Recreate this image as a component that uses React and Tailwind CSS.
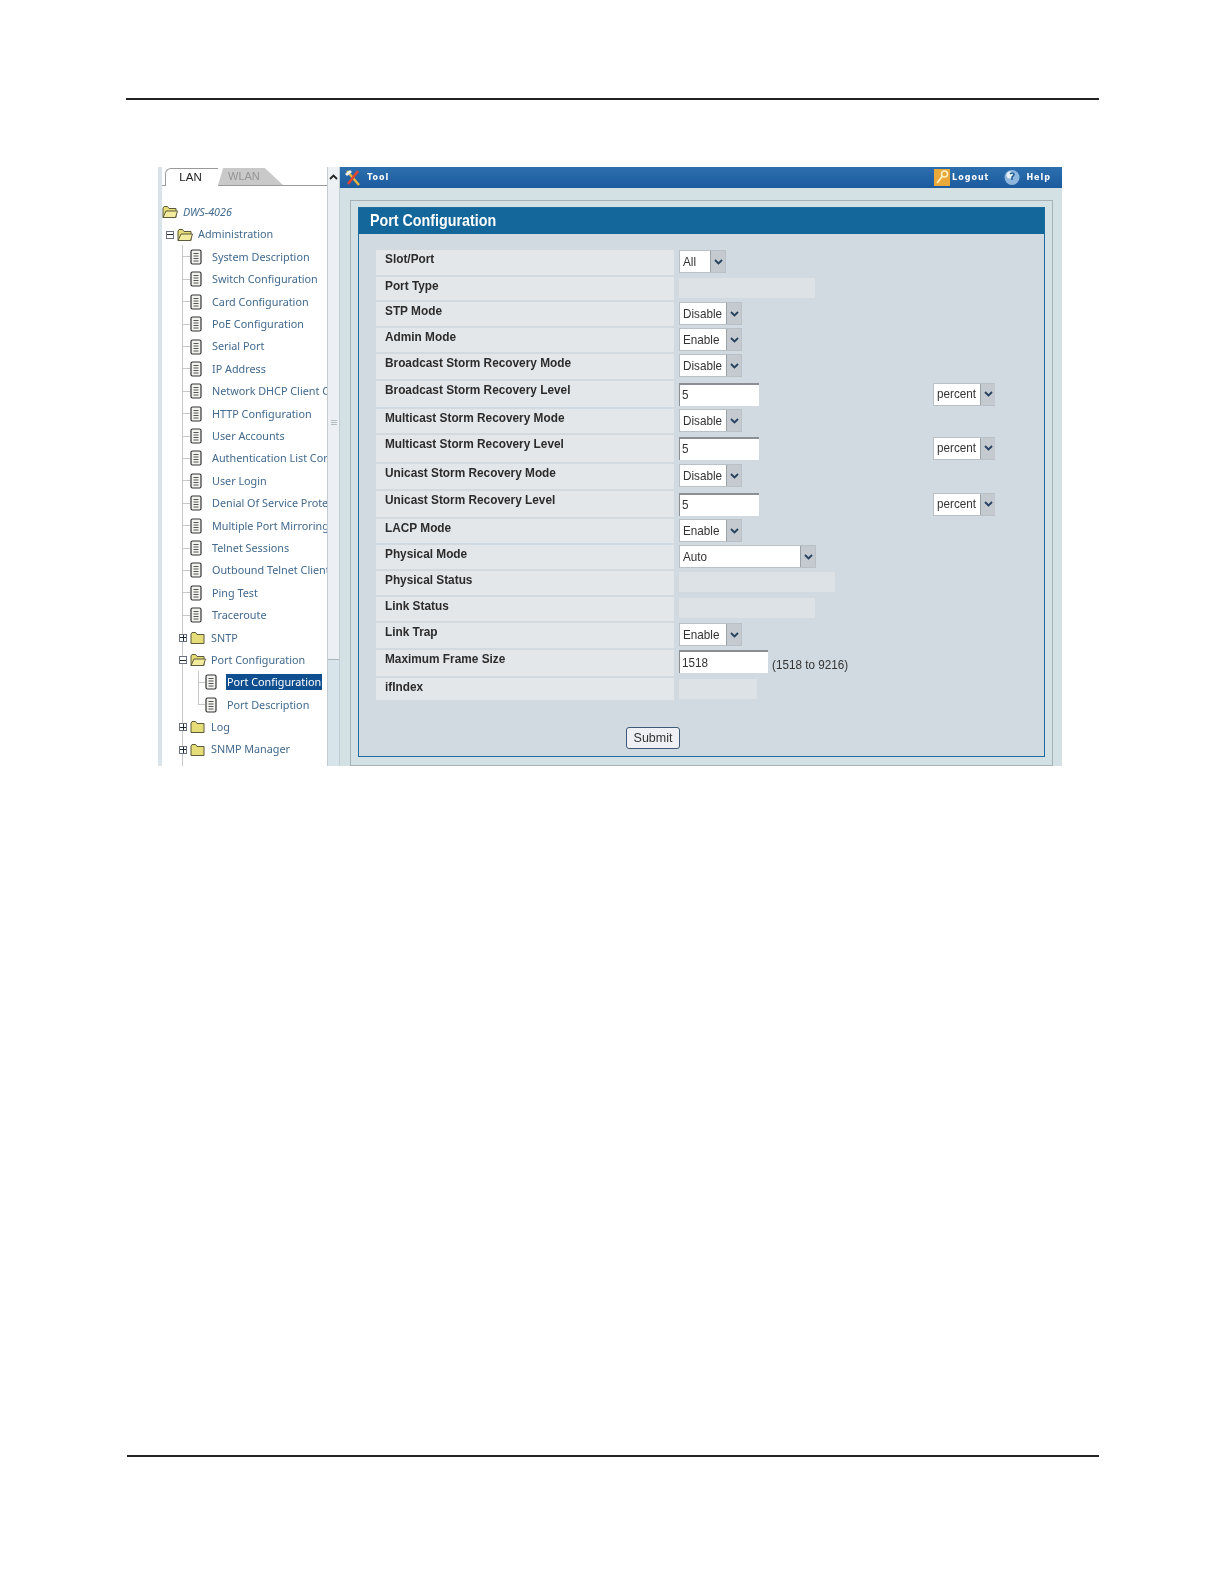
const treeRows = [
  { label: "DWS-4026", indent: 0, icon: "open", italic: true },
  { label: "Administration", indent: 4, icon: "open", box: "minus" },
  { label: "System Description", indent: 28, icon: "doc", stub: true },
  { label: "Switch Configuration", indent: 28, icon: "doc", stub: true },
  { label: "Card Configuration", indent: 28, icon: "doc", stub: true },
  { label: "PoE Configuration", indent: 28, icon: "doc", stub: true },
  { label: "Serial Port", indent: 28, icon: "doc", stub: true },
  { label: "IP Address", indent: 28, icon: "doc", stub: true },
  { label: "Network DHCP Client Configuration", indent: 28, icon: "doc", stub: true },
  { label: "HTTP Configuration", indent: 28, icon: "doc", stub: true },
  { label: "User Accounts", indent: 28, icon: "doc", stub: true },
  { label: "Authentication List Configuration", indent: 28, icon: "doc", stub: true },
  { label: "User Login", indent: 28, icon: "doc", stub: true },
  { label: "Denial Of Service Protection", indent: 28, icon: "doc", stub: true },
  { label: "Multiple Port Mirroring", indent: 28, icon: "doc", stub: true },
  { label: "Telnet Sessions", indent: 28, icon: "doc", stub: true },
  { label: "Outbound Telnet Client", indent: 28, icon: "doc", stub: true },
  { label: "Ping Test", indent: 28, icon: "doc", stub: true },
  { label: "Traceroute", indent: 28, icon: "doc", stub: true },
  { label: "SNTP", indent: 17, icon: "closed", box: "plus" },
  { label: "Port Configuration", indent: 17, icon: "open", box: "minus" },
  { label: "Port Configuration", indent: 43, icon: "doc", stub: true, selected: true },
  { label: "Port Description", indent: 43, icon: "doc", stub: true },
  { label: "Log", indent: 17, icon: "closed", box: "plus" },
  { label: "SNMP Manager", indent: 17, icon: "closed", box: "plus" },
  { label: "", indent: 17, icon: "closed", box: "plus" },
];

const formRows = [
  { label: "Slot/Port", h: "h-[27px]", select: "All", selectW: "w-[47px]" },
  { label: "Port Type", h: "h-[25px]", bar: "w-[136px]" },
  { label: "STP Mode", h: "h-[26px]", select: "Disable" },
  { label: "Admin Mode", h: "h-[26px]", select: "Enable" },
  { label: "Broadcast Storm Recovery Mode", h: "h-[27px]", select: "Disable" },
  { label: "Broadcast Storm Recovery Level", h: "h-[28px]", input: "5", unit: true },
  { label: "Multicast Storm Recovery Mode", h: "h-[26px]", select: "Disable" },
  { label: "Multicast Storm Recovery Level", h: "h-[29px]", input: "5", unit: true },
  { label: "Unicast Storm Recovery Mode", h: "h-[27px]", select: "Disable" },
  { label: "Unicast Storm Recovery Level", h: "h-[28px]", input: "5", unit: true },
  { label: "LACP Mode", h: "h-[26px]", select: "Enable" },
  { label: "Physical Mode", h: "h-[26px]", select: "Auto", selectW: "w-[137px]" },
  { label: "Physical Status", h: "h-[26px]", bar: "w-[156px]" },
  { label: "Link Status", h: "h-[26px]", bar: "w-[136px]" },
  { label: "Link Trap", h: "h-[27px]", select: "Enable" },
  { label: "Maximum Frame Size", h: "h-[28px]", input: "1518", wide: true, hint: "(1518 to 9216)" },
  { label: "ifIndex", h: "h-[24px]", bar: "w-[78px]" },
];

const FolderIcon = ({ open }) => (
  <svg width="16" height="14" viewBox="0 0 16 14" className="shrink-0">
    <path d="M1 3 L1 12.5 L14 12.5 L14 3.5 L7 3.5 L5.5 1.5 L2 1.5 Z" fill="#e6dc78" stroke="#5b5a3a" strokeWidth="1" />
    {open && <path d="M1 12.5 L4 6 L15.5 6 L13.5 12.5 Z" fill="#f3ec9f" stroke="#5b5a3a" strokeWidth="1" />}
  </svg>
);

const DocIcon = () => (
  <svg width="12" height="16" viewBox="0 0 12 16" className="shrink-0">
    <rect x="1" y="1" width="10" height="14" rx="1.5" fill="#f2f2ee" stroke="#333" strokeWidth="1.2" />
    <path d="M3.5 4.5 H8.5 M3.5 7 H8.5 M3.5 9.5 H8.5 M3.5 12 H8.5" stroke="#444" strokeWidth="0.9" />
  </svg>
);

const TreeBox = ({ type }) => (
  <span className="w-[8px] h-[8px] border border-gray-500 bg-white flex items-center justify-center shrink-0 relative">
    <span className="w-[6px] h-px bg-gray-800"></span>
    {type === "plus" && <span className="absolute w-px h-[6px] bg-gray-800"></span>}
  </span>
);

const TreeRow = ({ row }) => (
  <div className="h-[22.4px] flex items-center whitespace-nowrap" style={{ paddingLeft: row.indent }}>
    {row.box && (
      <span className="mr-[3px]">
        <TreeBox type={row.box} />
      </span>
    )}
    {row.stub && <span className="w-[7px] h-px bg-[#c8c8c8] -ml-[7px] shrink-0"></span>}
    {row.icon === "doc" ? <DocIcon /> : <FolderIcon open={row.icon === "open"} />}
    <span
      className={
        "text-[10.8px] " +
        (row.icon === "doc" ? "ml-[9px] px-px " : "ml-[5px] ") +
        (row.italic ? "italic " : "") +
        (row.selected ? "bg-[#0f4f8f] text-white" : "text-[#41698d]")
      }
    >
      {row.label}
    </span>
  </div>
);

const SelectBox = ({ value, width = "w-[63px]" }) => (
  <div className={"h-[23px] bg-white border border-[#b9c0c6] flex items-center justify-between text-[13px] text-[#333] pl-[3px] " + width}>
    <span className="scale-x-[0.9] origin-left">{value}</span>
    <span className="w-[15px] h-full bg-[#c4cad0] border-l border-[#9aa3aa] flex items-center justify-center shrink-0">
      <svg width="9" height="6" viewBox="0 0 9 6">
        <path d="M1 1 L4.5 4.5 L8 1" fill="none" stroke="#27415f" strokeWidth="1.8" />
      </svg>
    </span>
  </div>
);

const TextBox = ({ value, wide }) => (
  <div className={"h-[23px] bg-white border-t-2 border-l border-t-[#8b8f93] border-l-[#8b8f93] flex items-center pl-[2px] text-[13px] text-[#333] " + (wide ? "w-[89px]" : "w-[80px] mt-[1.5px]")}>
    <span className="scale-x-[0.9] origin-left">{value}</span>
  </div>
);

const FormRow = ({ row }) => (
  <div className={"flex " + row.h}>
    <div className="w-[298px] mb-[2px] bg-[#e4e7ea] pl-[9px] text-[13px] leading-[18px] font-bold text-[#2b2b2b] shrink-0">
      <span className="inline-block scale-x-[0.91] origin-left whitespace-nowrap">{row.label}</span>
    </div>
    <div className="ml-[5px] flex items-start flex-1">
      {row.select && <SelectBox value={row.select} width={row.selectW} />}
      {row.bar && <div className={"h-[20px] mt-[1px] bg-[#dde2e6] " + row.bar}></div>}
      {row.input && <TextBox value={row.input} wide={row.wide} />}
      {row.hint && <span className="ml-[4px] mt-[5px] text-[13px] text-[#333] inline-block scale-x-[0.9] origin-left whitespace-nowrap">{row.hint}</span>}
      {row.unit && (
        <div className="ml-auto mr-[49px] mt-[1.5px]">
          <SelectBox value="percent" width="w-[62px]" />
        </div>
      )}
    </div>
  </div>
);

const App = () => {
  return (
    <div className="w-[1224px] h-[1584px] bg-white overflow-hidden flex flex-col font-['Liberation_Sans',Arial,sans-serif]">
      <div className="h-[2px] bg-[#222] mt-[98px] ml-[126px] w-[973px] shrink-0"></div>

      <div className="mt-[67px] ml-[158px] w-[904px] h-[599px] flex overflow-hidden blur-[0.5px] shrink-0">
        {/* tree */}
        <div className="w-[169px] bg-white border-l-[4px] border-l-[#d9e3ea] flex flex-col overflow-hidden font-['Noto_Sans',sans-serif] shrink-0">
          <div className="h-[19px] flex items-end border-b border-[#9a9a9a] shrink-0 font-['Liberation_Sans',sans-serif]">
            <div className="ml-[3px] w-[53px] h-[18px] bg-white border-l border-t border-[#9a9a9a] rounded-tl-md flex items-center justify-center text-[11.5px] text-[#222] -mb-px pr-[3px] relative">
              LAN
            </div>
            <div className="w-[65px] h-[17px] bg-[#c9c9c9] [clip-path:polygon(0_100%,8%_0,72%_0,100%_100%)] flex items-center pl-[10px] text-[11px] text-[#959595]">
              WLAN
            </div>
          </div>
          <div className="pt-[15px] relative flex-1">
            <div className="absolute left-[20px] top-[59px] bottom-0 w-px bg-[#c8c8c8]"></div>
            <div className="absolute left-[36px] top-[485px] h-[34px] w-px bg-[#c8c8c8]"></div>
            {treeRows.map((row, i) => (
              <div key={i} className="relative">
                <TreeRow row={row} />
              </div>
            ))}
          </div>
        </div>

        {/* scrollbar */}
        <div className="w-[13px] bg-[#e3e8ed] border-x border-[#c3ccd3] flex flex-col shrink-0">
          <div className="h-[19px] bg-[#eef1f4] flex items-center justify-center shrink-0">
            <svg width="9" height="6" viewBox="0 0 9 6">
              <path d="M1 5 L4.5 1.5 L8 5" fill="none" stroke="#222" strokeWidth="1.8" />
            </svg>
          </div>
          <div className="h-[474px] bg-[#eceff3] border-b border-[#aab3ba] flex flex-col items-center justify-center gap-px">
            <span className="w-[6px] h-px bg-[#b4bcc3]"></span>
            <span className="w-[6px] h-px bg-[#b4bcc3]"></span>
            <span className="w-[6px] h-px bg-[#b4bcc3]"></span>
          </div>
          <div className="flex-1 bg-[#d7e4ea]"></div>
        </div>

        {/* main */}
        <div className="flex-1 flex flex-col bg-[#d3e0e4] min-w-0">
          <div className="h-[21px] bg-gradient-to-b from-[#2c6fae] to-[#1c5b9e] flex items-center text-white text-[8px] font-bold tracking-[1px] shrink-0 font-['DejaVu_Sans',sans-serif]">
            <svg width="18" height="18" viewBox="0 0 18 18" className="ml-[4px]">
              <path d="M3 2 L15 16" stroke="#e8b83a" strokeWidth="2.4" />
              <path d="M14 2 L4 15" stroke="#e2442f" strokeWidth="2.6" />
              <path d="M1 5 L6 1 L8 3 L3 7 Z" fill="#f1f1f1" />
            </svg>
            <span className="ml-[5px]">Tool</span>
            <div className="ml-auto flex items-center">
              <svg width="16" height="17" viewBox="0 0 16 17">
                <rect width="16" height="17" fill="#e9a83a" />
                <circle cx="10.5" cy="5" r="3" fill="none" stroke="#fff2c8" strokeWidth="1.5" />
                <path d="M8.5 7 L3 14" stroke="#fff2c8" strokeWidth="1.6" />
              </svg>
              <span className="ml-[2px]">Logout</span>
              <svg width="16" height="17" viewBox="0 0 16 17" className="ml-[15px]">
                <circle cx="8" cy="8.5" r="7.5" fill="#8fb6dc" />
                <circle cx="6" cy="6" r="3.5" fill="#e8f1f8" />
                <path d="M6 5 Q8 3 10 5 Q10 7 8 8 L8 11" fill="none" stroke="#1f5c9a" strokeWidth="1.5" />
              </svg>
              <span className="ml-[6px] mr-[11px]">Help</span>
            </div>
          </div>

          <div className="mt-[12px] ml-[10px] w-[703px] flex-1 border border-[#a7b1b6] px-[7px] pt-[6px]">
            <div className="h-[550px] border border-[#1f6d9c] bg-[#d1dae1] flex flex-col">
              <div className="h-[26px] bg-[#14679a] text-white text-[17px] font-bold pl-[11px] flex items-center shrink-0">
                <span className="inline-block scale-x-[0.84] origin-left">Port Configuration</span>
              </div>
              <div className="pl-[17px] pt-[16px] flex flex-col">
                {formRows.map((row) => (
                  <FormRow key={row.label} row={row} />
                ))}
              </div>
              <div className="ml-[267px] mt-[23px]">
                <button className="w-[54px] h-[22px] bg-[#eef0f3] border border-[#3d5a78] rounded-[3px] text-[12.5px] text-[#333]">
                  Submit
                </button>
              </div>
            </div>
          </div>
        </div>
      </div>

      <div className="h-[2px] bg-[#222] mt-[689px] ml-[127px] w-[972px] shrink-0"></div>
    </div>
  );
};

export default App;
